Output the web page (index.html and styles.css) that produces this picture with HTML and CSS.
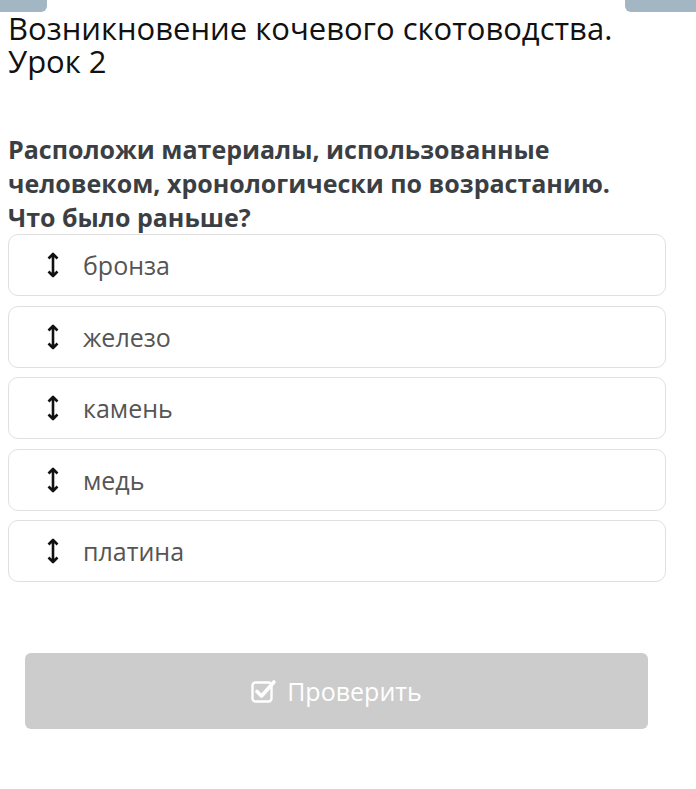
FILE: index.html
```html
<!DOCTYPE html>
<html lang="ru">
<head>
<meta charset="utf-8">
<link rel="stylesheet" href="styles.css">
</head>
<body>
<div class="tabs"><span class="tab tab-left"></span><span class="tab tab-right"></span></div>
<h1 class="title">Возникновение кочевого скотоводства. Урок 2</h1>
<p class="question">Расположи материалы, использованные человеком, хронологически по возрастанию. Что было раньше?</p>
<ul class="list">
  <li class="item"><svg class="arrow" viewBox="0 0 12 26" width="12" height="26"><path d="M6 2v22M1.5 6.5L6 2l4.5 4.5M1.5 19.5L6 24l4.5-4.5" fill="none" stroke="#111" stroke-width="2.6" stroke-linejoin="round"/></svg><span>бронза</span></li>
  <li class="item"><svg class="arrow" viewBox="0 0 12 26" width="12" height="26"><path d="M6 2v22M1.5 6.5L6 2l4.5 4.5M1.5 19.5L6 24l4.5-4.5" fill="none" stroke="#111" stroke-width="2.6" stroke-linejoin="round"/></svg><span>железо</span></li>
  <li class="item"><svg class="arrow" viewBox="0 0 12 26" width="12" height="26"><path d="M6 2v22M1.5 6.5L6 2l4.5 4.5M1.5 19.5L6 24l4.5-4.5" fill="none" stroke="#111" stroke-width="2.6" stroke-linejoin="round"/></svg><span>камень</span></li>
  <li class="item"><svg class="arrow" viewBox="0 0 12 26" width="12" height="26"><path d="M6 2v22M1.5 6.5L6 2l4.5 4.5M1.5 19.5L6 24l4.5-4.5" fill="none" stroke="#111" stroke-width="2.6" stroke-linejoin="round"/></svg><span>медь</span></li>
  <li class="item"><svg class="arrow" viewBox="0 0 12 26" width="12" height="26"><path d="M6 2v22M1.5 6.5L6 2l4.5 4.5M1.5 19.5L6 24l4.5-4.5" fill="none" stroke="#111" stroke-width="2.6" stroke-linejoin="round"/></svg><span>платина</span></li>
</ul>
<div class="actions">
  <button class="check-btn" type="button"><svg class="check-icon" viewBox="0 0 26 24" width="26" height="24"><rect x="1.5" y="3.5" width="19" height="19" rx="3" fill="none" stroke="#fff" stroke-width="2.4"/><path d="M6 12.5l4.5 4.5L23 3" fill="none" stroke="#fff" stroke-width="3.6" stroke-linecap="round" stroke-linejoin="round"/></svg><span>Проверить</span></button>
</div>
</body>
</html>
```
FILE: styles.css
```css
html, body {
  margin: 0;
  padding: 0;
  background: #fff;
}
body {
  font-family: "Open Sans", "Noto Sans", sans-serif;
  width: 696px;
  height: 789px;
  overflow: hidden;
}
.tabs {
  display: flex;
  justify-content: space-between;
  height: 12px;
}
.tab {
  display: block;
  height: 12px;
  background: #a3b6c4;
}
.tab-left {
  width: 47px;
  border-radius: 0 0 6px 0;
}
.tab-right {
  width: 71px;
  border-radius: 0 0 0 6px;
}
.title {
  margin: 0;
  padding: 0 0 0 8px;
  font-weight: 400;
  font-size: 31px;
  line-height: 33px;
  color: #111;
  width: 640px;
}
.question {
  margin: 54px 0 0 0;
  padding: 0 0 0 8px;
  font-weight: 700;
  font-size: 25px;
  line-height: 34px;
  color: #3b3f44;
  width: 640px;
}
.list {
  list-style: none;
  margin: 0 0 0 8px;
  padding: 0;
  width: 658px;
  display: flex;
  flex-direction: column;
  gap: 9.5px;
}
.item {
  box-sizing: border-box;
  height: 62px;
  border: 1px solid #e0e0e0;
  border-radius: 10px;
  display: flex;
  align-items: center;
  padding-left: 38px;
  font-size: 25px;
  color: #555;
}
.arrow {
  display: block;
  margin-right: 24px;
}
.actions {
  margin: 71px 0 0 25px;
  width: 623px;
}
.check-btn {
  width: 100%;
  height: 76px;
  border: 0;
  border-radius: 6px;
  background: #cccccc;
  color: #fff;
  font-family: "Open Sans", "Noto Sans", sans-serif;
  font-size: 25px;
  display: flex;
  align-items: center;
  justify-content: center;
  gap: 10px;
  padding: 0;
}
.check-icon {
  display: block;
}
```
